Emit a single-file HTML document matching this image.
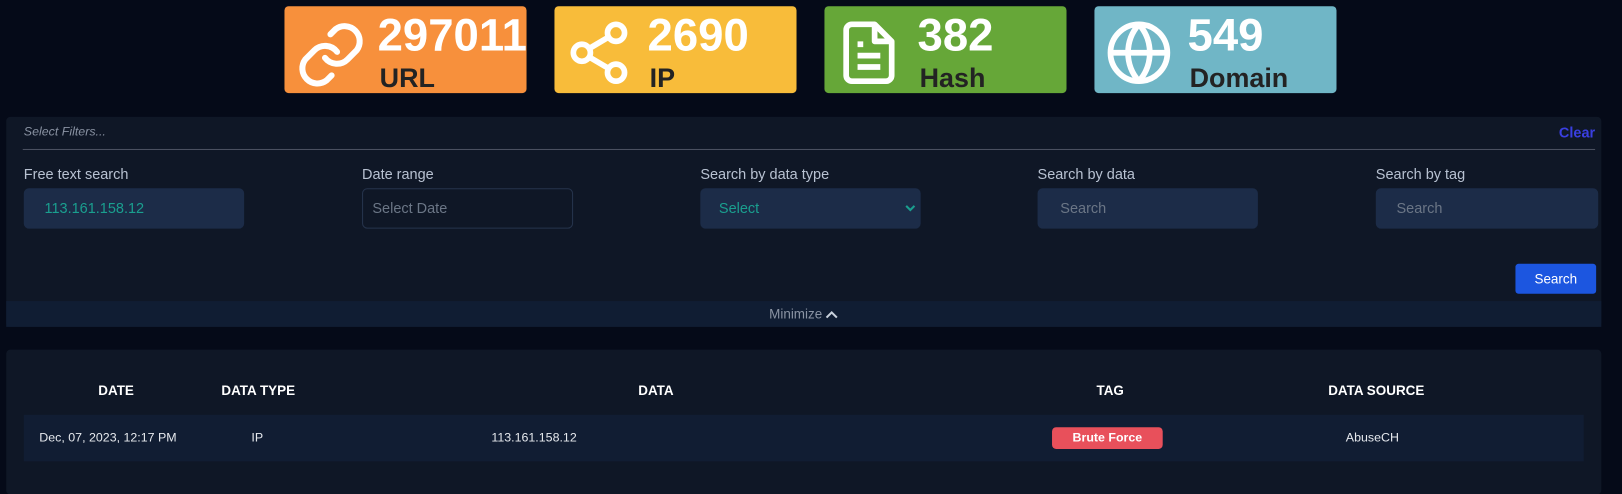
<!DOCTYPE html><html><head><style>
*{margin:0;padding:0;box-sizing:border-box}
body{width:1622px;height:470px;background:#050a18;font-family:"Liberation Sans",sans-serif;overflow:hidden;color:#c9d1dc}
#w{position:absolute;left:0;top:0;width:1568px;height:455px;transform:scale(1.03444);transform-origin:0 0}
.a{position:absolute}
.card{position:absolute;top:6px;width:234px;height:84px;border-radius:4px}
.num{position:absolute;left:90px;top:4px;font-size:44px;font-weight:bold;color:#fff;letter-spacing:0}
.lbl{position:absolute;left:92px;top:54px;font-size:26px;font-weight:bold;color:#232323}
.card svg{position:absolute;left:10px;top:12px}
.lab{position:absolute;top:160px;font-size:14px;color:#b8c2d2}
.inp{position:absolute;top:182px;width:213px;height:39px;border-radius:5px;background:#1c2c48;font-size:14px;color:#6b7686;padding:11px 20px}
.h{position:absolute;top:370px;font-size:13px;font-weight:bold;color:#fff}
.c{position:absolute;top:416px;font-size:12px;color:#e6e9ee}
</style></head><body><div id="w">
<div class="card" style="left:275px;background:#f7903c">
<svg width="70" height="70" viewBox="0 0 24 24" fill="none" stroke="#fff" stroke-width="2" stroke-linecap="round"><path d="M10 13a5 5 0 0 0 7.5.5l3-3a5 5 0 0 0-7-7l-1.7 1.7"/><path d="M14 11a5 5 0 0 0-7.5-.5l-3 3a5 5 0 0 0 7 7l1.7-1.7"/></svg>
<div class="num">297011</div><div class="lbl">URL</div></div>
<div class="card" style="left:536px;background:#f8bc3a">
<svg width="66" height="66" viewBox="0 0 24 24" fill="none" stroke="#fff" stroke-width="2"><circle cx="18" cy="5" r="3"/><circle cx="6" cy="12" r="3"/><circle cx="18" cy="19" r="3"/><path d="M8.6 13.5l6.8 4M15.4 6.5l-6.8 4"/></svg>
<div class="num">2690</div><div class="lbl">IP</div></div>
<div class="card" style="left:797px;background:#66a738">
<svg width="66" height="66" viewBox="0 0 24 24" fill="none" stroke="#fff" stroke-width="2" stroke-linejoin="round"><path d="M14 2H6a2 2 0 0 0-2 2v16a2 2 0 0 0 2 2h12a2 2 0 0 0 2-2V8z"/><path d="M14 2v6h6M8 13h8M8 17h8M8 9h2"/></svg>
<div class="num">382</div><div class="lbl">Hash</div></div>
<div class="card" style="left:1058px;background:#70b6c6">
<svg width="66" height="66" viewBox="0 0 24 24" fill="none" stroke="#fff" stroke-width="2"><circle cx="12" cy="12" r="10"/><path d="M2 12h20M12 2a15 15 0 0 1 0 20M12 2a15 15 0 0 0 0 20"/></svg>
<div class="num">549</div><div class="lbl">Domain</div></div>

<div class="a" style="left:6px;top:113px;width:1542px;height:203px;background:#0f1726;border-radius:4px"></div>
<div class="a" style="left:23px;top:120px;font-size:12px;font-style:italic;color:#8a93a3">Select Filters...</div>
<div class="a" style="left:1507px;top:120px;font-size:14px;font-weight:bold;color:#3a3fe0">Clear</div>
<div class="a" style="left:22px;top:144px;width:1520px;height:1px;background:#4a5160"></div>
<div class="lab" style="left:23px">Free text search</div>
<div class="lab" style="left:350px">Date range</div>
<div class="lab" style="left:677px">Search by data type</div>
<div class="lab" style="left:1003px">Search by data</div>
<div class="lab" style="left:1330px">Search by tag</div>
<div class="inp" style="left:23px;color:#1a9f8f">113.161.158.12</div>
<div class="inp" style="left:350px;width:204px;background:#0f1726;border:1px solid #26344c;padding:10px 9px">Select Date</div>
<div class="inp" style="left:677px;color:#1a9f8f;padding-left:18px">Select<svg style="position:absolute;right:5px;top:16px" width="10" height="7" viewBox="0 0 10 7"><path d="M1 1l4 4 4-4" fill="none" stroke="#1a9f8f" stroke-width="2"/></svg></div>
<div class="inp" style="left:1003px;padding-left:22px">Search</div>
<div class="inp" style="left:1330px;width:215px">Search</div>
<div class="a" style="left:1465px;top:255px;width:78px;height:29px;background:#1c56e0;border-radius:3px;color:#fff;font-size:13px;text-align:center;line-height:29px">Search</div>
<div class="a" style="left:6px;top:291px;width:1542px;height:25px;background:#101d33;font-size:13px;color:#8a93a3;text-align:center;line-height:25px">Minimize <svg width="12" height="8" viewBox="0 0 12 8"><path d="M1 7l5-5 5 5" fill="none" stroke="#c9d1dc" stroke-width="2"/></svg></div>

<div class="a" style="left:6px;top:338px;width:1542px;height:140px;background:#0f1726;border-radius:4px"></div>
<div class="a" style="left:23px;top:401px;width:1508px;height:45px;background:#111d33"></div>
<div class="h" style="left:95px">DATE</div>
<div class="h" style="left:214px">DATA TYPE</div>
<div class="h" style="left:617px">DATA</div>
<div class="h" style="left:1060px">TAG</div>
<div class="h" style="left:1284px">DATA SOURCE</div>
<div class="c" style="left:38px">Dec, 07, 2023, 12:17 PM</div>
<div class="c" style="left:243px">IP</div>
<div class="c" style="left:475px">113.161.158.12</div>
<div class="a" style="left:1017px;top:413px;width:107px;height:21px;background:#e8505b;border-radius:4px;color:#fff;font-size:12px;font-weight:bold;text-align:center;line-height:21px">Brute Force</div>
<div class="c" style="left:1301px">AbuseCH</div>
</div></body></html>
